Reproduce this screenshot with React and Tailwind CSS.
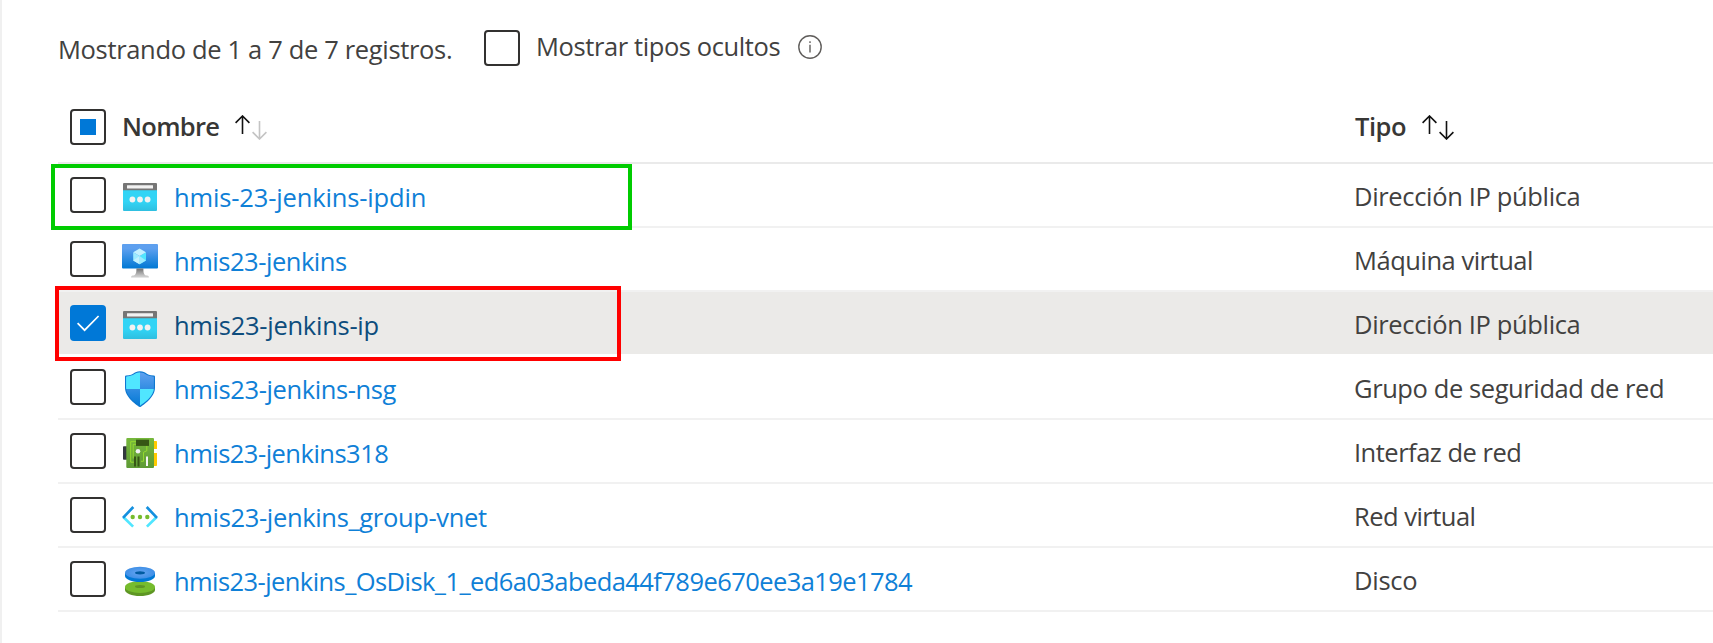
const rows = [
  { name: "hmis-23-jenkins-ipdin", nameTrack: "tracking-[-0.150px]", type: "Dirección IP pública", typeTrack: "tracking-[-0.345px]", Icon: PublicIpIcon },
  { name: "hmis23-jenkins", nameTrack: "tracking-[-0.467px]", type: "Máquina virtual", typeTrack: "tracking-[-0.479px]", Icon: VirtualMachineIcon },
  { name: "hmis23-jenkins-ip", nameTrack: "tracking-[-0.273px]", type: "Dirección IP pública", typeTrack: "tracking-[-0.345px]", Icon: PublicIpIcon, selected: true },
  { name: "hmis23-jenkins-nsg", nameTrack: "tracking-[-0.395px]", type: "Grupo de seguridad de red", typeTrack: "tracking-[-0.409px]", Icon: SecurityGroupIcon },
  { name: "hmis23-jenkins318", nameTrack: "tracking-[-0.510px]", type: "Interfaz de red", typeTrack: "tracking-[-0.500px]", Icon: NetworkInterfaceIcon },
  { name: "hmis23-jenkins_group-vnet", nameTrack: "tracking-[-0.339px]", type: "Red virtual", typeTrack: "tracking-[-0.520px]", Icon: VirtualNetworkIcon },
  { name: "hmis23-jenkins_OsDisk_1_ed6a03abeda44f789e670ee3a19e1784", nameTrack: "tracking-[-0.575px]", type: "Disco", typeTrack: "tracking-[-0.250px]", Icon: DiskIcon },
];

function PublicIpIcon() {
  return (
    <svg viewBox="0 0 36 36" className="size-9">
      <defs>
        <linearGradient id="ip-body" x1="0" y1="0" x2="0" y2="1">
          <stop offset="0.55" stopColor="#32d4f5" />
          <stop offset="1" stopColor="#2fbfe0" />
        </linearGradient>
      </defs>
      <path d="M1 11h34v20a1 1 0 0 1-1 1H2a1 1 0 0 1-1-1z" fill="url(#ip-body)" />
      <path d="M2 4h32a1 1 0 0 1 1 1v6.2H1V5a1 1 0 0 1 1-1z" fill="#767676" />
      <rect x="5" y="6.2" width="26" height="3.4" rx="0.4" fill="#f2f2f2" />
      <circle cx="10.4" cy="20.5" r="2.9" fill="#f2f2f2" />
      <circle cx="18" cy="20.5" r="2.9" fill="#f2f2f2" />
      <circle cx="25.6" cy="20.5" r="2.9" fill="#f2f2f2" />
    </svg>
  );
}

function VirtualMachineIcon() {
  return (
    <svg viewBox="0 0 18 18" className="size-9">
      <defs>
        <linearGradient id="vm-screen" x1="0" y1="1" x2="0" y2="0">
          <stop offset="0" stopColor="#0078d4" />
          <stop offset="0.82" stopColor="#5ea0ef" />
        </linearGradient>
        <linearGradient id="vm-stand" x1="0" y1="1" x2="0" y2="0">
          <stop offset="0.15" stopColor="#ccc" />
          <stop offset="1" stopColor="#707070" />
        </linearGradient>
      </defs>
      <rect y="0.5" width="18" height="12.2" rx="0.5" fill="url(#vm-screen)" />
      <path d="M12 4.6v4.1l-3.2 1.9V6.5z" fill="#50e6ff" />
      <path d="M12 4.6 8.8 6.5 5.6 4.6 8.8 2.8z" fill="#c3f1ff" />
      <path d="M8.8 6.5v4.1L5.6 8.7V4.6z" fill="#9cebff" />
      <path d="m5.6 8.7 3.2-2.2v4.1z" fill="#c3f1ff" />
      <path d="M12 8.7 8.8 6.5v4.1z" fill="#9cebff" />
      <path d="M12.5 16.3c-1.7-.3-1.8-1.6-1.8-3.6H7.2c0 2-.1 3.3-1.8 3.6a1 1 0 0 0-.9 1h9a1 1 0 0 0-1-1z" fill="url(#vm-stand)" />
    </svg>
  );
}

function SecurityGroupIcon() {
  return (
    <svg viewBox="0 0 18 18" className="size-9">
      <defs>
        <linearGradient id="nsg-blue" x1="0" y1="0" x2="0" y2="1">
          <stop offset="0.05" stopColor="#5ea0ef" />
          <stop offset="1" stopColor="#0078d4" />
        </linearGradient>
        <clipPath id="nsg-clip">
          <path d="M15.95 8.4c0 4.4-5.4 8-6.6 8.7a.6.6 0 0 1-.7 0C7.5 16.4 2.05 12.8 2.05 8.4V3.2c0-.3.25-.5.5-.5C6.75 2.6 5.8.8 9 .8s2.25 1.8 6.45 1.9c.3 0 .5.2.5.5z" />
        </clipPath>
      </defs>
      <path d="M16.5 8.4c0 4.8-5.9 8.7-7.1 9.5a.7.7 0 0 1-.8 0C7.4 17.1 1.5 13.2 1.5 8.4V2.8c0-.3.25-.6.55-.6C6.6 2.1 5.55.1 9 .1s2.400 2 6.950 2.100c.3 0 .55.3.55.6z" fill="#0f78d0" />
      <g clipPath="url(#nsg-clip)">
        <rect width="18" height="18" fill="url(#nsg-blue)" />
        <path d="M0 0h9v9H0zM9 9h9v9H9z" fill="#50e6ff" />
      </g>
    </svg>
  );
}

function NetworkInterfaceIcon() {
  return (
    <svg viewBox="0 0 36 36" className="size-9">
      <defs>
        <linearGradient id="nic-board" x1="0" y1="0" x2="0" y2="1">
          <stop offset="0" stopColor="#76b83c" />
          <stop offset="1" stopColor="#5e9a35" />
        </linearGradient>
      </defs>
      <path d="M1.800 11.300H6v13.400H1.800a.8.800 0 0 1-.8-.8V12.100a.8.800 0 0 1 .8-.8z" fill="#32383d" />
      <path d="M31 6h3.200a.8.800 0 0 1 .8.800V14h-4zM31 18h4v12.200a.8.800 0 0 1-.8.800H31z" fill="#ffca00" />
      <rect x="4.300" y="3" width="27.700" height="30" rx="1" fill="url(#nic-board)" />
      <path d="M14 6.700H8.700v20.500h3.100M14 9.300H11.200v14.200M24.800 11v4.800l-3.300 1.500v9h-2.500" fill="none" stroke="#9be02c" strokeWidth="0.900" />
      <rect x="14" y="4.700" width="13" height="6.200" fill="#365615" />
      <circle cx="16" cy="16.300" r="2.300" fill="#f2f2f2" />
      <path d="M12 21.500h2V31.500h-2zM15.500 21.500h2V31.500h-2z" fill="#365615" />
      <path d="M24 21.500h2V31h-2z" fill="#f5f5f5" />
    </svg>
  );
}

function VirtualNetworkIcon() {
  return (
    <svg viewBox="0 0 36 36" className="size-9" fill="none" strokeWidth="2.700">
      <path d="m1.300 18 9.800 9.600M34.700 18l-9.800 9.600" stroke="#50e6ff" />
      <path d="M1 18.900 11.300 8M35 18.900 24.700 8" stroke="#1490df" />
      <g fill="#76bc2d">
        <circle cx="10.700" cy="18" r="2.200" />
        <circle cx="18" cy="18" r="2.200" />
        <circle cx="25.300" cy="18" r="2.200" />
      </g>
    </svg>
  );
}

function DiskIcon() {
  return (
    <svg viewBox="0 0 36 36" className="size-9">
      <defs>
        <radialGradient id="disk-top">
          <stop offset="0.2" stopColor="#5ea0ef" />
          <stop offset="1" stopColor="#3f8fe6" />
        </radialGradient>
      </defs>
      <path d="M3 24.200v2.800c0 3.300 6.700 6 15 6s15-2.700 15-6v-2.800z" fill="#5e9624" />
      <ellipse cx="18" cy="24" rx="15" ry="6" fill="#76bc2d" />
      <ellipse cx="18" cy="23.600" rx="5" ry="1.500" fill="#5e9624" />
      <path d="M3 10v3c0 3.300 6.700 6 15 6s15-2.700 15-6v-3z" fill="#0078d4" />
      <ellipse cx="18" cy="9.800" rx="15" ry="6" fill="url(#disk-top)" />
      <ellipse cx="18" cy="9.800" rx="5" ry="1.600" fill="#005ba1" />
    </svg>
  );
}

function Checkbox({ state = "off" }) {
  if (state === "on") {
    return (
      <span className="block size-9 shrink-0 rounded-[4px] bg-[#0078d7]">
        <svg viewBox="0 0 36 36" className="size-9" fill="none" stroke="#fff" strokeWidth="1.700">
          <path d="m7.600 18.200 7 7L28.600 11" />
        </svg>
      </span>
    );
  }
  return (
    <span className="flex size-9 shrink-0 items-center justify-center rounded-[4px] border-2 border-[#323130] bg-white">
      {state === "mixed" && <span className="size-4 bg-[#0078d7]" />}
    </span>
  );
}

function SortArrows({ downColor }) {
  return (
    <svg viewBox="0 0 32 25" className="h-[25px] w-8 shrink-0" fill="none" strokeWidth="1.600">
      <path d="M7.500 19V1M.600 7.900l6.900-6.900 6.900 6.900" stroke="#111" />
      <path d="M24.500 6v18M17.600 17.100l6.900 6.900 6.900-6.900" stroke={downColor} />
    </svg>
  );
}

export default function App() {
  return (
    <div className="relative h-[643px] w-full overflow-hidden border-l-2 border-[#f0f0f0] bg-white font-['Open_Sans','Noto_Sans',sans-serif] text-[25.5px] leading-9 whitespace-nowrap text-[#42413f]">
      <div className="flex h-[98px] items-start pl-14">
        <span className="mt-[31px] w-[424px] tracking-[-0.335px]">Mostrando de 1 a 7 de 7 registros.</span>
        <label className="flex pt-[30px] pl-[2px]">
          <Checkbox />
          <span className="-mt-0.5 ml-4 w-[262px] tracking-[-0.398px]">Mostrar tipos ocultos</span>
        </label>
        <svg viewBox="0 0 24 24" className="mt-[35px] size-6" fill="none" stroke="#605e5c" strokeWidth="1.400">
          <circle cx="12" cy="12" r="11.200" />
          <path d="M12 9.800v7.700M12 6.300v1.800" />
        </svg>
      </div>

      <div className="ml-14">
        <div className="flex h-[66px] items-start border-b-2 border-[#eaeaea] pl-3 font-semibold text-[#383735]">
          <div className="flex w-[1284px] pt-[11px]">
            <Checkbox state="mixed" />
            <span className="-mt-px ml-4 w-[113px] tracking-[-0.700px]">Nombre</span>
            <div className="pt-[6px]">
              <SortArrows downColor="#c4c4c4" />
            </div>
          </div>
          <div className="flex pt-[10px]">
            <span className="w-[68px] pl-px tracking-[-0.500px]">Tipo</span>
            <div className="pt-[7px]">
              <SortArrows downColor="#111" />
            </div>
          </div>
        </div>

        {rows.map(({ name, nameTrack, type, typeTrack, Icon, selected }) => (
          <div
            key={name}
            className={`flex h-16 items-start border-b-2 pl-3 ${
              selected ? "border-white bg-[#ebeae8]" : "border-[#f1f1f1]"
            }`}
          >
            <div className="pt-[13px]">
              <Checkbox state={selected ? "on" : "off"} />
            </div>
            <div className="ml-4 pt-[15px]">
              <Icon />
            </div>
            <a className={`ml-4 w-[1180px] pt-[15px] ${nameTrack} ${selected ? "text-[#0d4d7d]" : "text-[#0f80d7]"}`}>
              {name}
            </a>
            <span className={`pt-[14px] ${typeTrack}`}>{type}</span>
          </div>
        ))}
      </div>

      <div className="absolute top-[164px] left-[49px] h-[66px] w-[581px] border-4 border-[#00cc00]" />
      <div className="absolute top-[286px] left-[53px] h-[75px] w-[566px] border-4 border-[#ff0000]" />
    </div>
  );
}
